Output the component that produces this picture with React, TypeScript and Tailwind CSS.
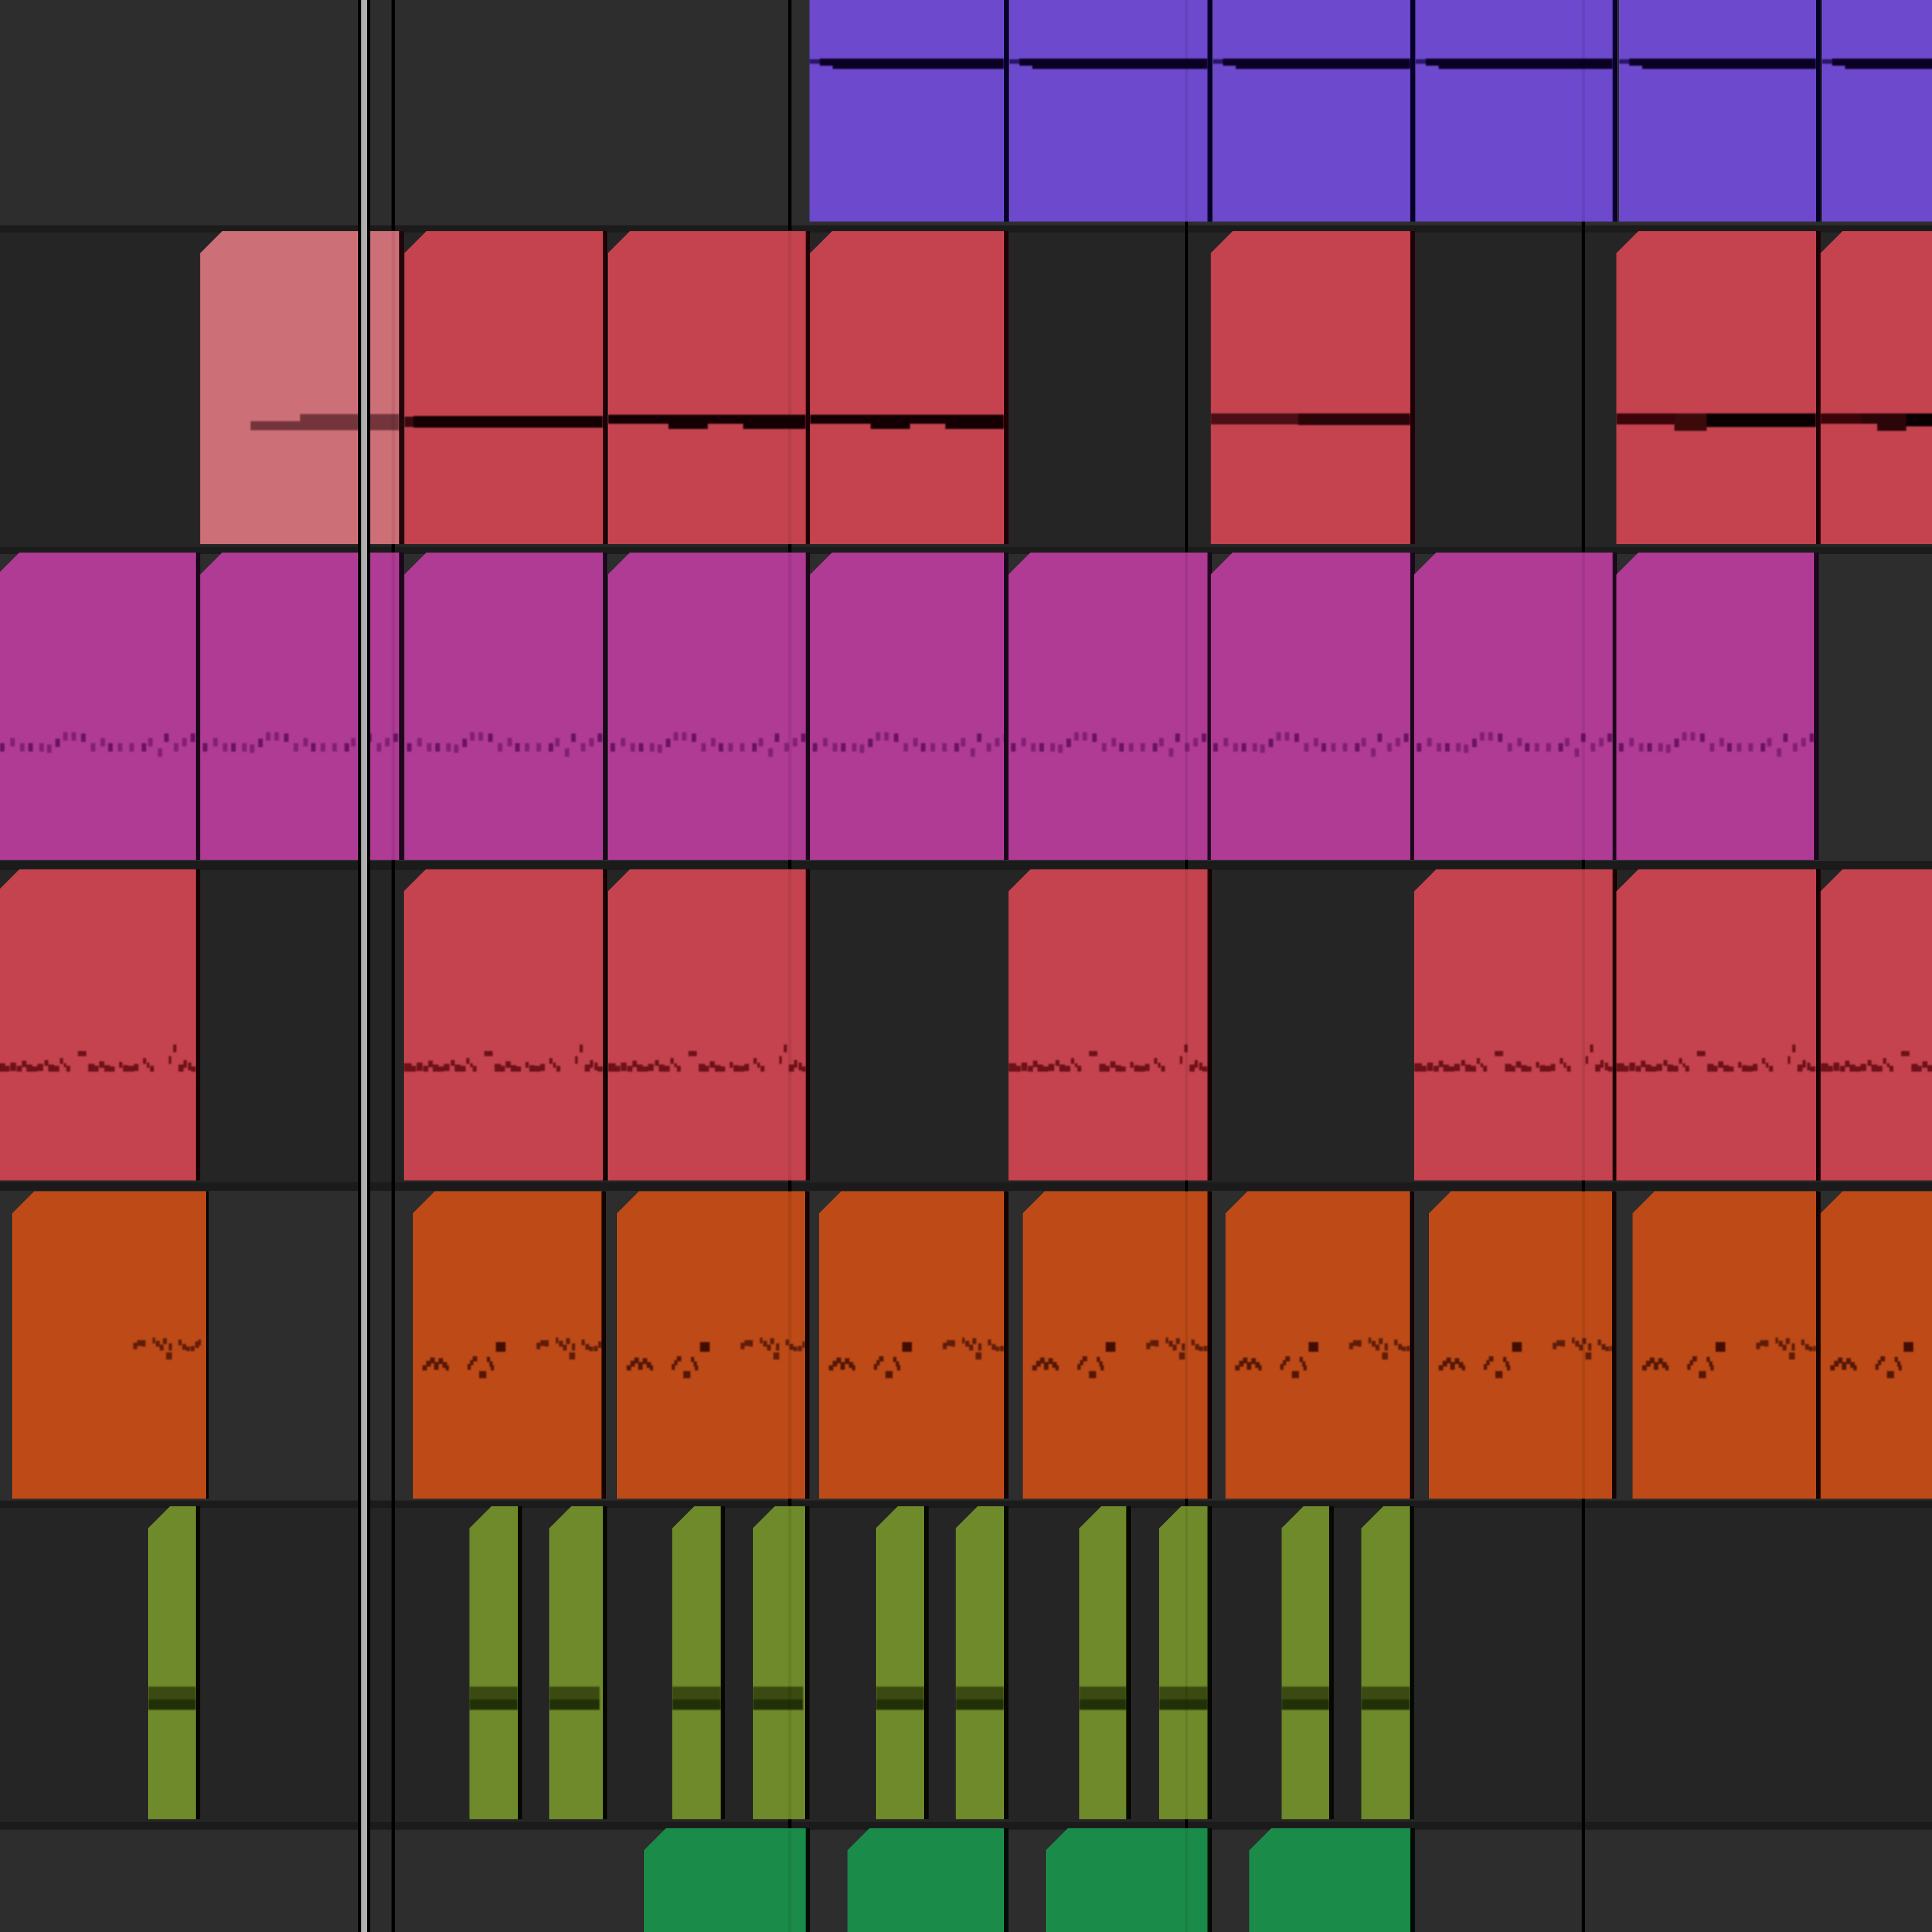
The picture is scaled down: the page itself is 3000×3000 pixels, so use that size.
import React from "react";

type R = [number, number, number, number];
type Span = [number, number];
type Seg = [number, number, number, number, string];

const GRID = [608, 1224, 1840, 2456];

const purple: Span[] = [[1257, 1559], [1567, 1875], [1883, 2190], [2198, 2504], [2514, 2820], [2829, 3010]];
const magenta: Span[] = [[-4, 304], [311, 620], [628, 936], [944, 1251], [1258, 1559], [1566, 1875], [1880, 2190], [2196, 2504], [2510, 2817]];
const red4: Span[] = [[-4, 304], [627, 936], [944, 1251], [1566, 1875], [2196, 2504], [2510, 2820], [2827, 3010]];
const orange: Span[] = [[19, 320], [641, 934], [958, 1250], [1272, 1559], [1588, 1875], [1903, 2189], [2219, 2503], [2535, 2820], [2827, 3010]];
const olive: Span[] = [[230, 304], [729, 804], [853, 936], [1044, 1119], [1169, 1250], [1360, 1435], [1484, 1559], [1676, 1749], [1800, 1875], [1990, 2064], [2114, 2189]];
const emerald: Span[] = [[1000, 1251], [1316, 1559], [1624, 1875], [1940, 2190]];

const DARK = "#140002";
const stepped: Seg[] = [
  [0, 94, 285, 14, DARK],
  [94, 61, 285, 22, DARK],
  [155, 55, 285, 14, DARK],
  [210, 110, 285, 22, DARK],
];

const red2: { span: Span; segs: Seg[] }[] = [
  { span: [628, 936], segs: [[0, 14, 288, 16, "#3a0a10"], [14, 300, 287, 18, DARK]] },
  { span: [944, 1251], segs: stepped },
  { span: [1258, 1559], segs: stepped },
  { span: [1880, 2190], segs: [[0, 136, 283, 17, "#4a0e14"], [136, 180, 283, 18, "#2a0408"]] },
  {
    span: [2510, 2820],
    segs: [[0, 90, 283, 17, "#3a0408"], [90, 50, 283, 27, "#3d0a0c"], [140, 180, 283, 21, "#0a0002"]],
  },
  {
    span: [2827, 3010],
    segs: [[0, 63, 283, 16, "#3a0408"], [63, 25, 283, 16, "#2c0508"], [88, 45, 283, 27, "#2c0508"], [133, 80, 283, 20, "#0a0002"]],
  },
];

const magentaWave: [number, number][] = [
  [7, 60], [23, 52], [38, 60], [51, 60], [68, 60], [80, 62], [93, 53], [105, 43], [118, 43], [133, 45],
  [148, 60], [163, 52], [175, 60], [190, 60], [208, 60], [227, 60], [237, 52], [252, 68], [262, 45], [277, 60], [290, 52], [303, 45],
];

const redWave: R[] = [
  [0, 301, 12, 13], [12, 305, 7, 9], [20, 300, 9, 13], [30, 305, 8, 9], [38, 297, 7, 10], [45, 303, 9, 11], [54, 306, 8, 8],
  [62, 302, 9, 11], [73, 296, 6, 9], [79, 303, 9, 11], [88, 305, 8, 9], [97, 293, 5, 9], [103, 301, 4, 6], [107, 305, 6, 9],
  [125, 282, 13, 8], [141, 302, 10, 12], [151, 305, 6, 9], [158, 298, 8, 10], [166, 304, 9, 10], [175, 306, 7, 8],
  [189, 299, 5, 9], [195, 304, 8, 10], [203, 305, 9, 9], [212, 302, 7, 11], [226, 293, 5, 9], [232, 300, 4, 8], [237, 305, 6, 9],
  [266, 290, 4, 12], [273, 272, 5, 12], [281, 303, 8, 11], [289, 296, 5, 12], [296, 300, 5, 12], [301, 306, 8, 8],
];

const orangeA: R[] = [[15, 270, 7, 8], [21, 263, 7, 9], [27, 258, 7, 9], [33, 265, 7, 12], [40, 259, 7, 9], [46, 265, 7, 9], [51, 270, 5, 8]];
const orangeB: R[] = [[85, 268, 5, 9], [89, 262, 5, 8], [93, 256, 7, 8], [115, 257, 5, 8], [119, 264, 5, 8], [121, 270, 5, 8], [103, 279, 11, 11]];
const orangeDot: R = [129, 234, 15, 15];
const orangeC: R[] = [
  [192, 235, 6, 10], [198, 231, 7, 9], [205, 231, 6, 10], [222, 227, 4, 9], [227, 232, 6, 9], [233, 238, 6, 9], [238, 228, 6, 9],
  [243, 250, 9, 11], [247, 236, 5, 11], [262, 230, 5, 9], [268, 237, 6, 9], [274, 241, 6, 7], [281, 240, 6, 8], [288, 233, 6, 10], [293, 230, 4, 9],
];

function Rects({ items, fill, dx = 0 }: { items: R[]; fill: string; dx?: number }) {
  return (
    <>
      {items.map((r, i) => (
        <rect key={i} x={r[0] + dx} y={r[1]} width={r[2]} height={r[3]} fill={fill} />
      ))}
    </>
  );
}

function Clip({
  span,
  top,
  height,
  fill,
  edge,
  plain,
  thin,
  children,
}: {
  span: Span;
  top: number;
  height: number;
  fill: string;
  edge: string;
  plain?: boolean;
  thin?: boolean;
  children?: React.ReactNode;
}) {
  return (
    <div
      className={`absolute flex ${edge} ${thin ? "border-r-[4px]" : "border-r-[7px]"}`}
      style={{ left: span[0], top, height, width: span[1] - span[0] + (thin ? 4 : 7) }}
    >
      <div
        className={`relative h-full flex-1 ${fill} ${plain ? "" : "[clip-path:polygon(34px_0,100%_0,100%_100%,0_100%,0_34px)]"}`}
      >
        {children ? <svg className="absolute inset-0 h-full w-full blur-[1.2px]">{children}</svg> : null}
      </div>
    </div>
  );
}

function Track({
  height,
  sep,
  bg,
  children,
}: {
  height: number;
  sep: number;
  bg: string;
  children: React.ReactNode;
}) {
  return (
    <div className="relative flex w-full shrink-0 flex-col" style={{ height }}>
      <div className={`flex-1 ${bg}`} />
      <div className="bg-[#1b1b1b]" style={{ height: sep }} />
      {GRID.map((x) => (
        <div key={x} className="absolute top-0 bottom-0 w-[5px] bg-black" style={{ left: x }} />
      ))}
      {children}
      {GRID.map((x) => (
        <div key={x} className="absolute top-0 bottom-0 w-[5px] bg-black/[0.07]" style={{ left: x }} />
      ))}
    </div>
  );
}

export default function App() {
  return (
    <div className="relative flex h-[3000px] w-[3000px] flex-col overflow-hidden bg-[#2d2d2d]">
      <Track height={361} sep={11} bg="bg-[#2d2d2d]">
        {purple.map((s, i) => (
          <Clip key={i} span={s} top={-20} height={364} fill="bg-[#6d49ce]" edge="border-[#07002c]" plain>
            <rect x={0} y={112} width={16} height={7} fill="#2a1668" />
            <rect x={16} y={111} width={20} height={11} fill="#0a0024" />
            <rect x={36} y={111} width={400} height={16} fill="#0a0024" />
          </Clip>
        ))}
      </Track>

      <Track height={499} sep={11} bg="bg-[#252525]">
        <Clip span={[311, 620]} top={-2} height={486} fill="bg-[#cd6f76]" edge="border-[#200509]">
          <rect x={78} y={295} width={78} height={14} fill="#73353b" />
          <rect x={155} y={284} width={160} height={25} fill="#73353b" />
        </Clip>
        {red2.map((c, i) => (
          <Clip key={i} span={c.span} top={-2} height={486} fill="bg-[#c4434e]" edge="border-[#200005]">
            {c.segs.map((g, k) => (
              <rect key={k} x={g[0]} width={g[1]} y={g[2]} height={g[3]} fill={g[4]} />
            ))}
          </Clip>
        ))}
      </Track>

      <Track height={491} sep={14} bg="bg-[#2d2d2d]">
        {magenta.map((s, i) => (
          <Clip key={i} span={s} top={-2} height={477} fill="bg-[#af3b95]" edge="border-[#1c061c]">
            {magentaWave.map(([x, y], k) => (
              <rect key={k} x={x - 3} y={y + 236} width={7} height={13} fill="#5e0a58" opacity={k % 3 === 0 ? 0.85 : 0.55} />
            ))}
          </Clip>
        ))}
      </Track>

      <Track height={498} sep={13} bg="bg-[#252525]">
        {red4.map((s, i) => (
          <Clip key={i} span={s} top={-1} height={483} fill="bg-[#c4434e]" edge="border-[#180003]">
            <Rects items={redWave} fill="#6e1119" />
          </Clip>
        ))}
      </Track>

      <Track height={493} sep={12} bg="bg-[#2d2d2d]">
        {orange.map((s, i) => (
          <Clip key={i} span={s} top={1} height={477} fill="bg-[#bd4a17]" edge="border-[#140300]" thin={i === 0}>
            {i > 0 ? <Rects items={orangeA} fill="#541706" /> : null}
            {i > 0 ? <Rects items={orangeB} fill="#541706" /> : null}
            {i > 0 ? <Rects items={[orangeDot]} fill="#420e03" /> : null}
            <Rects items={orangeC} fill="#5e1d0a" dx={i === 0 ? -4 : 0} />
          </Clip>
        ))}
      </Track>

      <Track height={499} sep={12} bg="bg-[#252525]">
        {olive.map((s, i) => (
          <Clip key={i} span={s} top={-3} height={486} fill="bg-[#6f8a2a]" edge="border-[#060800]">
            <rect x={0} y={280} width={78} height={20} fill="#3a4a10" />
            <rect x={0} y={300} width={78} height={16} fill="#223008" />
          </Clip>
        ))}
      </Track>

      <Track height={159} sep={0} bg="bg-[#2d2d2d]">
        {emerald.map((s, i) => (
          <Clip key={i} span={s} top={-2} height={200} fill="bg-[#1b8b4a]" edge="border-[#020c06]" />
        ))}
      </Track>

      <div className="absolute top-0 bottom-0 left-[556px] w-[19px] border-x-[5px] border-black bg-[#b0b0b0]" />
    </div>
  );
}
